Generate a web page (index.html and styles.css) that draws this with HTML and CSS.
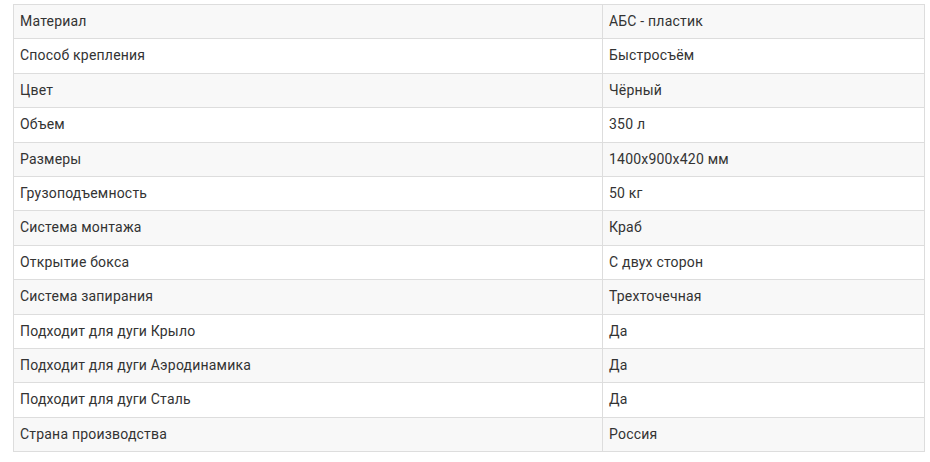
FILE: index.html
```html
<!DOCTYPE html>
<html lang="ru">
<head>
<meta charset="utf-8">
<link rel="stylesheet" href="styles.css">
</head>
<body>
<table class="specs">
<colgroup><col class="c1"><col class="c2"></colgroup>
<tbody>
<tr><td>Материал</td><td>АБС - пластик</td></tr>
<tr><td>Способ крепления</td><td>Быстросъём</td></tr>
<tr><td>Цвет</td><td>Чёрный</td></tr>
<tr><td>Объем</td><td>350 л</td></tr>
<tr><td>Размеры</td><td>1400x900x420 мм</td></tr>
<tr><td>Грузоподъемность</td><td>50 кг</td></tr>
<tr><td>Система монтажа</td><td>Краб</td></tr>
<tr><td>Открытие бокса</td><td>С двух сторон</td></tr>
<tr><td>Система запирания</td><td>Трехточечная</td></tr>
<tr><td>Подходит для дуги Крыло</td><td>Да</td></tr>
<tr><td>Подходит для дуги Аэродинамика</td><td>Да</td></tr>
<tr><td>Подходит для дуги Сталь</td><td>Да</td></tr>
<tr><td>Страна производства</td><td>Россия</td></tr>
</tbody>
</table>
</body>
</html>
```
FILE: styles.css
```css
html, body {
  background: #fff;
}
body {
  margin: 0;
  padding: 4px 6px 0 13px;
  font-family: Roboto, "Noto Sans", sans-serif;
  font-size: 14px;
  letter-spacing: 0.2px;
  color: #333;
}
.specs {
  width: 912px;
  border-collapse: collapse;
  table-layout: fixed;
}
.c1 { width: 589px; }
.specs td {
  border: 1px solid #ddd;
  padding: 8px 7px 8px 6px;
  line-height: 17.4px;
  vertical-align: middle;
}
.specs tr:nth-child(odd) td {
  background: #f8f8f8;
}
```
